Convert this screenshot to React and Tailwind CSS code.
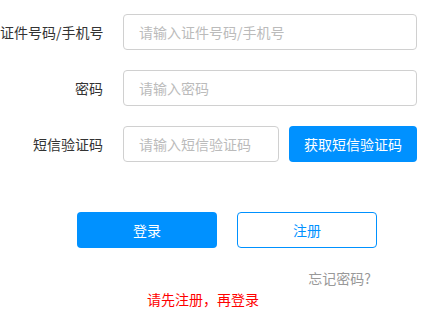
const font = { fontFamily: '"Noto Sans CJK SC", "Noto Sans", sans-serif' };

const Row = ({ label, children }) => (
  <div className="flex items-center h-9">
    <label className="w-[103px] shrink-0 text-right text-sm text-[#333] whitespace-nowrap">{label}</label>
    <div className="ml-5 flex items-center">{children}</div>
  </div>
);

const inputCls =
  'h-9 px-[15px] border border-[#d0d0d0] rounded text-sm text-[#333] placeholder:text-[#bbb] outline-none bg-white';

export default function App() {
  return (
    <div className="w-[440px] h-[317px] bg-white pt-[14px] overflow-hidden" style={font}>
      <div className="flex flex-col gap-5">
        <Row label="证件号码/手机号">
          <input className={`${inputCls} w-[294px]`} placeholder="请输入证件号码/手机号" />
        </Row>
        <Row label="密码">
          <input type="password" className={`${inputCls} w-[294px]`} placeholder="请输入密码" />
        </Row>
        <Row label="短信验证码">
          <input className={`${inputCls} w-[156px]`} placeholder="请输入短信验证码" />
          <button className="ml-[10px] h-9 w-[128px] rounded bg-[#0091ff] text-white text-sm">获取短信验证码</button>
        </Row>
      </div>

      <div className="mt-[50px] ml-[77px] flex gap-5">
        <button className="h-9 w-[140px] rounded bg-[#0091ff] text-white text-sm">登录</button>
        <button className="h-9 w-[140px] rounded border border-[#0091ff] text-[#0091ff] bg-white text-sm">注册</button>
      </div>

      <div className="mt-[20px] w-[371px] text-right text-sm text-[#999] leading-5">忘记密码?</div>
      <div className="mt-[1px] ml-[147px] text-sm text-[#ff0000] leading-5">请先注册，再登录</div>
    </div>
  );
}
